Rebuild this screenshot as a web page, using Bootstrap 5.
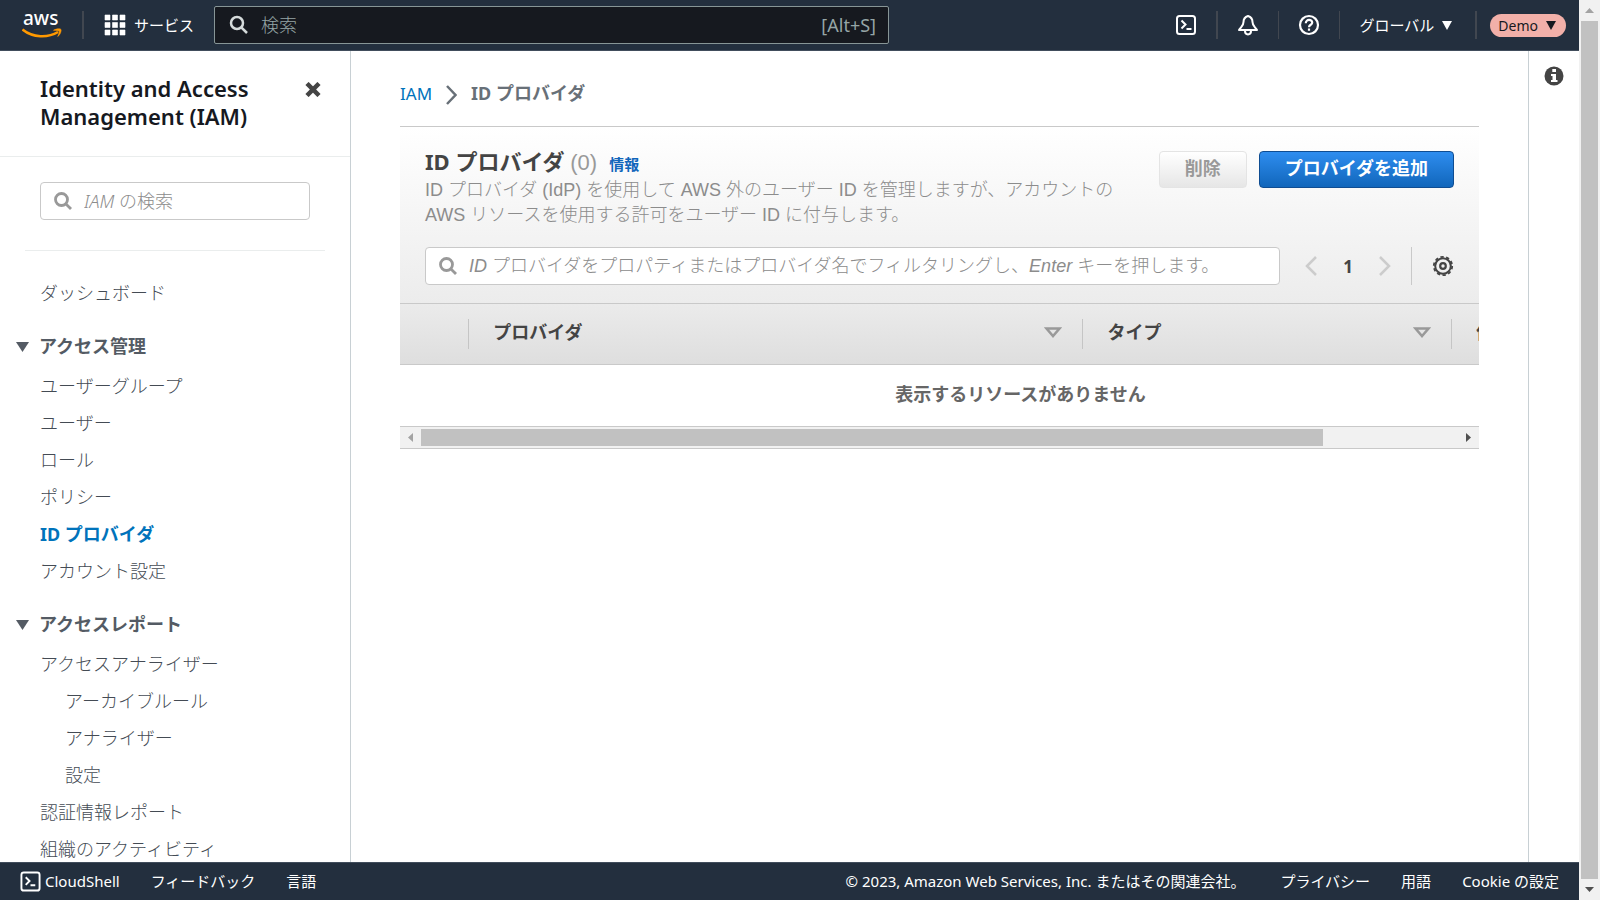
<!DOCTYPE html>
<html lang="ja">
<head>
<meta charset="utf-8">
<meta name="viewport" content="width=device-width, initial-scale=1">
<title>ID プロバイダ | IAM</title>
<link href="https://cdn.jsdelivr.net/npm/bootstrap@5.3.0/dist/css/bootstrap.min.css" rel="stylesheet">
<style>
  :root { --navy: #232f3e; --line: #c9c9c9; --muted: #999; }
  body { font-family: "Noto Sans", "Noto Sans CJK JP", sans-serif; font-size: 18px; line-height: 25px; color: #444; background: #fff; }
  a { text-decoration: none; }
  svg { display: block; flex: none; }
  button.plain { border: 0; background: none; padding: 0; color: inherit; }

  /* top bar */
  .topbar { height: 51px; background: var(--navy); border-bottom: 1px solid #414d5c; color: #fff; font-size: 15px; padding-left: 22px; padding-right: 13px; gap: 20px; }
  .topbar .tools { gap: 19px; }
  .rule { width: 2px; height: 28px; background: #414750; }
  .rule.thin { width: 1px; }
  .global-search { width: 675px; height: 38px; background: #16191f; border: 1px solid #879596; border-radius: 2px; padding: 0 12px 0 14px; color: #95a5a6; font-size: 18px; }
  .global-search input { background: none; border: 0; outline: 0; color: #fff; font-weight: 300; padding: 0; }
  .global-search input::placeholder { color: #95a5a6; opacity: 1; }
  .region { margin-right: 4px; }
  .account { gap: 13px; }
  button.pill { background: #f2b0a9; color: #16191f; border-radius: 12px; height: 23px; padding: 0 10px 0 8px; font-size: 14px; }

  /* side navigation */
  .side { width: 351px; border-right: 1px solid #c8d0d4; }
  .side h1 { font-size: 22px; line-height: 28px; font-weight: 600; color: #16191f; }
  .side-head { padding: 23px 29px 26px 40px; border-bottom: 1px solid #eaeded; }
  .field { height: 38px; border: 1px solid var(--line); border-radius: 4px; background: #fff; padding: 0 13px; }
  .field input { border: 0; outline: 0; background: none; font-style: italic; font-weight: 300; padding: 0; font-synthesis: weight; }
  .field input::placeholder { color: #8c8c8c; opacity: 1; }
  .side-search { padding: 25px 15px 30px; margin: 0 25px; border-bottom: 1px solid #eaeded; }
  .side-list a, .side-list button { display: block; line-height: 37px; color: #444b54; font-weight: 300; }
  .side-list { padding-left: 40px; }
  .side-list a.current { color: #0073bb; font-weight: 700; }
  .side-list button.group-head { color: #545b64; font-weight: 700; display: flex; align-items: center; gap: 10px; margin: 16px 0 3px -24px; }
  .side-list .sub { padding-left: 25px; }

  /* content */
  .content { padding: 30px 49px 0; }
  .crumbs { height: 45px; gap: 14px; }
  .crumbs a { color: #0073bb; font-size: 17px; }
  .crumbs b { color: #687078; }
  .panel-head { border-top: 1px solid var(--line); padding: 24px 25px 18px; background: linear-gradient(#fff, #ececec); font-family: "Liberation Sans", "Noto Sans CJK JP", sans-serif; }
  .title-row { height: 27px; line-height: 20px; }
  .panel-head h2 { font-family: "Noto Sans", "Noto Sans CJK JP", sans-serif; font-size: 22px; line-height: 20px; font-weight: 700; color: #444; }
  .panel-head h2 span { font-family: "Liberation Sans", sans-serif; font-weight: 400; color: var(--muted); }
  .info { font-size: 15px; font-weight: 700; color: #1166bb; }
  .desc { color: #8c8c8c; font-weight: 300; }
  .act { height: 37px; border-radius: 4px; font-weight: 700; line-height: 33px; padding: 0 25px; }
  .act-main { color: #fff; border: 1px solid #0f4d92; background: linear-gradient(#2e8def, #1166bb); }
  .act-off, .act-off:disabled { color: var(--muted); border: 1px solid #e4e4e4; background: linear-gradient(#fff, #e6e6e6); opacity: 1; }
  .filter-row { margin-top: 19px; gap: 25px; }
  .pager { gap: 26px; font-size: 17px; font-weight: 700; font-family: "Noto Sans", sans-serif; }
  .prefs { gap: 20px; margin-left: -5px; }
  .prefs .divider { width: 1px; height: 38px; background: var(--line); }
  .grid-wrap { overflow: hidden; }
  .grid { width: 115%; table-layout: fixed; border-collapse: collapse; border-top: 1px solid var(--line); }
  .grid thead { background: linear-gradient(#ebebeb, #dedede); border-bottom: 1px solid var(--line); }
  .grid th { height: 61px; padding: 0; color: #444; }
  .cell { height: 30px; padding: 0 20px 3px 24px; border-left: 1px solid #c5c5c5; }
  .grid td { height: 61px; padding: 0 0 2px; text-align: center; font-weight: 700; color: #666; }
  .hbar { height: 23px; background: #f1f1f1; border: solid var(--line); border-width: 1px 0; padding: 0 8px; }
  .hbar .track { height: 17px; margin: 0 8px; }
  .hbar .thumb { height: 17px; width: 87%; background: #c1c1c1; }
  .help-strip { width: 51px; border-left: 1px solid #c8d0d4; padding-top: 15px; }

  /* bottom bar */
  .bottombar { height: 38px; background: var(--navy); border-top: 1px solid #414d5c; color: #fff; font-size: 15px; padding: 0 20px; }
  .bottombar, .bottombar .end { gap: 31px; }
  .bottombar a, .bottombar button { color: #fff; }

  /* page scrollbar */
  .vbar { width: 21px; background: #f1f1f1; padding: 8px 0; }
  .vbar .thumb { width: 17px; background: #c1c1c1; }
</style>
</head>
<body>
<div class="d-flex vh-100 overflow-hidden">
  <div class="d-flex flex-column flex-grow-1 overflow-hidden">
    <header class="topbar d-flex align-items-center flex-shrink-0">
      <a href="#" aria-label="aws">
        <svg width="40" height="46" viewBox="0 0 40 46"><text x="1" y="23" fill="#fff" font-family="Noto Sans" font-weight="500" font-size="19">aws</text><path d="M.5 27.500C11 36 26 36 36 30" fill="none" stroke="#f90" stroke-width="2.400"/><path d="M31.500 28.300c3-1.800 7-1.800 7.500-.8.500 1-.5 5-3.200 7 1-2.500 1.800-4.800 1.200-5.400S33.500 28.500 31.500 28.300z" fill="#f90" stroke="#f90" stroke-width=".6"/></svg>
      </a>
      <span class="rule"></span>
      <button type="button" class="plain d-flex align-items-center gap-2 text-nowrap">
        <svg width="22" height="22" viewBox="0 0 22 22" fill="#fff"><path d="M1 1h5v5H1zM8.500 1h5v5h-5zM16 1h5v5h-5zM1 8.500h5v5H1zM8.500 8.500h5v5h-5zM16 8.500h5v5h-5zM1 16h5v5H1zM8.500 16h5v5h-5zM16 16h5v5h-5z" stroke="#fff" stroke-width=".6" stroke-linejoin="round"/></svg>
        <span>サービス</span>
      </button>
      <label class="global-search d-flex align-items-center">
        <svg class="me-2" width="20" height="20" viewBox="0 0 20 20" fill="none" stroke="#d5dbdb" stroke-width="2.500"><circle cx="8" cy="8" r="6"/><path d="M12.300 12.300 18 18"/></svg>
        <input type="text" class="flex-grow-1 ms-1" placeholder="検索" aria-label="検索">
        <span>[Alt+S]</span>
      </label>
      <div class="tools d-flex align-items-center ms-auto text-nowrap">
        <button type="button" class="plain" aria-label="CloudShell"><svg width="22" height="22" viewBox="0 0 22 22" fill="none" stroke="#fff" stroke-width="2"><rect x="2" y="2" width="18" height="18" rx="2.500"/><path d="M6.500 6.500 10.500 10.500 6.500 14.500M11.500 15h5"/></svg></button>
        <span class="rule"></span>
        <button type="button" class="plain" aria-label="通知"><svg width="22" height="22" viewBox="0 0 22 22" fill="none" stroke="#fff" stroke-width="2" stroke-linejoin="round"><path d="M11 2C8 3 6.500 5 6.500 8c0 4-2.500 5-4.500 8h18c-2-3-4.500-4-4.500-8 0-3-1.500-5-4.500-6zM8 17c0 4.500 6 4.500 6 0"/></svg></button>
        <span class="rule thin"></span>
        <button type="button" class="plain" aria-label="ヘルプ"><svg width="22" height="22" viewBox="0 0 22 22" fill="none" stroke="#fff" stroke-width="2.200"><circle cx="11" cy="11" r="9"/><path d="M7.800 9.200c0-4.500 6.600-4 6.400-.4-.1 2-3.200 2-3.200 4.400M11 14.500v2.200"/></svg></button>
        <span class="rule thin"></span>
        <button type="button" class="plain region d-flex align-items-center gap-2"><span>グローバル</span><svg width="10" height="9" viewBox="0 0 10 9" fill="#fff"><path d="M0 0h10L5 9z"/></svg></button>
        <div class="account d-flex align-items-center">
          <span class="rule"></span>
          <button type="button" class="plain pill d-flex align-items-center gap-2"><span>Demo</span><svg width="10" height="9" viewBox="0 0 10 9" fill="#16191f"><path d="M0 0h10L5 9z"/></svg></button>
        </div>
      </div>
    </header>

    <div class="d-flex flex-grow-1 overflow-hidden">
      <nav class="side flex-shrink-0 overflow-hidden">
        <div class="side-head d-flex justify-content-between align-items-start">
          <h1 class="mb-0">Identity and Access<br>Management (IAM)</h1>
          <button type="button" class="plain pt-2" aria-label="閉じる"><svg width="16" height="15" viewBox="0 0 16 15" stroke="#444" stroke-width="4.500"><path d="M2 1.500l12 12M14 1.500l-12 12"/></svg></button>
        </div>
        <div class="side-search">
          <label class="field d-flex align-items-center">
            <svg class="me-2" width="18" height="18" viewBox="0 0 18 18" fill="none" stroke="#999" stroke-width="2.800"><circle cx="7.500" cy="7.500" r="6"/><path d="M11.700 11.700 17 17"/></svg>
            <input type="text" class="w-100 ms-1" placeholder="IAM の検索" aria-label="IAM の検索">
          </label>
        </div>
        <div class="side-list pt-4">
          <a href="#">ダッシュボード</a>
          <button type="button" class="plain group-head"><svg width="13" height="10" viewBox="0 0 13 10" fill="#545b64"><path d="M0 0h13L6.500 10z"/></svg>アクセス管理</button>
          <a href="#">ユーザーグループ</a>
          <a href="#">ユーザー</a>
          <a href="#">ロール</a>
          <a href="#">ポリシー</a>
          <a href="#" class="current" aria-current="page">ID プロバイダ</a>
          <a href="#">アカウント設定</a>
          <button type="button" class="plain group-head"><svg width="13" height="10" viewBox="0 0 13 10" fill="#545b64"><path d="M0 0h13L6.500 10z"/></svg>アクセスレポート</button>
          <a href="#">アクセスアナライザー</a>
          <a href="#" class="sub">アーカイブルール</a>
          <a href="#" class="sub">アナライザー</a>
          <a href="#" class="sub">設定</a>
          <a href="#">認証情報レポート</a>
          <a href="#">組織のアクティビティ</a>
        </div>
      </nav>

      <main class="content flex-grow-1 overflow-hidden">
        <nav class="crumbs d-flex align-items-start" aria-label="パンくずリスト">
          <a href="#">IAM</a>
          <svg class="mt-1" width="11" height="20" viewBox="0 0 11 20" fill="none" stroke="#687078" stroke-width="2.500"><path d="M1 1l8.500 9L1 19"/></svg>
          <b>ID プロバイダ</b>
        </nav>
        <section>
          <div class="panel-head">
            <div class="d-flex justify-content-between">
              <div>
                <div class="title-row d-flex align-items-baseline">
                  <h2 class="mb-0">ID プロバイダ <span>(0)</span></h2>
                  <a href="#" class="info ms-2 ps-1">情報</a>
                </div>
                <p class="desc mb-0">ID プロバイダ (IdP) を使用して AWS 外のユーザー ID を管理しますが、アカウントの<br>AWS リソースを使用する許可をユーザー ID に付与します。</p>
              </div>
              <div class="d-flex gap-2 text-nowrap">
                <button type="button" class="act act-off me-1" disabled>削除</button>
                <button type="button" class="act act-main">プロバイダを追加</button>
              </div>
            </div>
            <div class="filter-row d-flex align-items-center">
              <label class="field d-flex align-items-center flex-grow-1">
                <svg class="me-2" width="18" height="18" viewBox="0 0 18 18" fill="none" stroke="#999" stroke-width="2.800"><circle cx="7.500" cy="7.500" r="6"/><path d="M11.700 11.700 17 17"/></svg>
                <input type="text" class="flex-grow-1 ms-1" placeholder="ID プロバイダをプロパティまたはプロバイダ名でフィルタリングし、Enter キーを押します。" aria-label="フィルター">
              </label>
              <div class="pager d-flex align-items-center">
                <button type="button" class="plain" aria-label="前へ"><svg width="12" height="20" viewBox="0 0 12 20" fill="none" stroke="#ccc" stroke-width="2.500"><path d="M11 1 2 10l9 9"/></svg></button>
                <span>1</span>
                <button type="button" class="plain" aria-label="次へ"><svg width="12" height="20" viewBox="0 0 12 20" fill="none" stroke="#ccc" stroke-width="2.500"><path d="M1 1l9 9-9 9"/></svg></button>
              </div>
              <div class="prefs d-flex align-items-center">
                <span class="divider"></span>
                <button type="button" class="plain" aria-label="設定"><svg width="22" height="22" viewBox="0 0 22 22" fill="none" stroke="#444"><circle cx="11" cy="11" r="7.800" stroke-width="2"/><circle cx="11" cy="11" r="9.200" stroke-width="1.800" stroke-dasharray="3.300 2.480"/><circle cx="11" cy="11" r="2.800" stroke-width="2.200"/></svg></button>
              </div>
            </div>
          </div>
          <div class="grid-wrap">
            <table class="grid">
              <colgroup><col style="width:5.500%"><col style="width:49.500%"><col style="width:29.700%"><col></colgroup>
              <thead>
                <tr>
                  <th scope="col" aria-label="選択"></th>
                  <th scope="col"><div class="cell d-flex align-items-center justify-content-between">プロバイダ<svg width="18" height="11" viewBox="0 0 18 11" fill="none" stroke="#999" stroke-width="2.500"><path d="M2.500 1.500h13L9 9z"/></svg></div></th>
                  <th scope="col"><div class="cell d-flex align-items-center justify-content-between">タイプ<svg width="18" height="11" viewBox="0 0 18 11" fill="none" stroke="#999" stroke-width="2.500"><path d="M2.500 1.500h13L9 9z"/></svg></div></th>
                  <th scope="col"><div class="cell d-flex align-items-center">作成時刻</div></th>
                </tr>
              </thead>
              <tbody><tr><td colspan="4">表示するリソースがありません</td></tr></tbody>
            </table>
          </div>
          <div class="hbar d-flex align-items-center">
            <svg width="5" height="9" viewBox="0 0 5 9" fill="#a3a3a3"><path d="M5 0v9L0 4.500z"/></svg>
            <div class="track flex-grow-1"><div class="thumb"></div></div>
            <svg width="5" height="9" viewBox="0 0 5 9" fill="#505050"><path d="M0 0v9l5-4.500z"/></svg>
          </div>
        </section>
      </main>

      <aside class="help-strip flex-shrink-0">
        <button type="button" class="plain d-block mx-auto" aria-label="情報"><svg width="20" height="20" viewBox="0 0 20 20"><circle cx="10" cy="10" r="9.500" fill="#444"/><path d="M8.300 3h3.700v3H8.300zM7 8h5v6h1.500v2H7v-2h1.500v-4H7z" fill="#fff"/></svg></button>
      </aside>
    </div>

    <footer class="bottombar d-flex align-items-center flex-shrink-0 text-nowrap">
      <button type="button" class="plain d-flex align-items-center"><svg class="me-1" width="21" height="21" viewBox="0 0 22 22" fill="none" stroke="#fff" stroke-width="2"><rect x="1.500" y="1.500" width="19" height="19" rx="2.500"/><path d="M6 6.500 10 10.500 6 14.500M11 15h5"/></svg><span>CloudShell</span></button>
      <a href="#">フィードバック</a>
      <button type="button" class="plain">言語</button>
      <div class="end d-flex ms-auto">
        <span class="me-1">© 2023, Amazon Web Services, Inc. またはその関連会社。</span>
        <a href="#">プライバシー</a><a href="#">用語</a><a href="#">Cookie の設定</a>
      </div>
    </footer>
  </div>

  <div class="vbar d-flex flex-column align-items-center flex-shrink-0" aria-hidden="true">
    <svg width="9" height="5" viewBox="0 0 9 5" fill="#a3a3a3"><path d="M0 5h9L4.500 0z"/></svg>
    <div class="thumb flex-grow-1 my-2"></div>
    <svg width="9" height="5" viewBox="0 0 9 5" fill="#505050"><path d="M0 0h9L4.500 5z"/></svg>
  </div>
</div>
<script src="https://cdn.jsdelivr.net/npm/bootstrap@5.3.0/dist/js/bootstrap.bundle.min.js"></script>
</body>
</html>
